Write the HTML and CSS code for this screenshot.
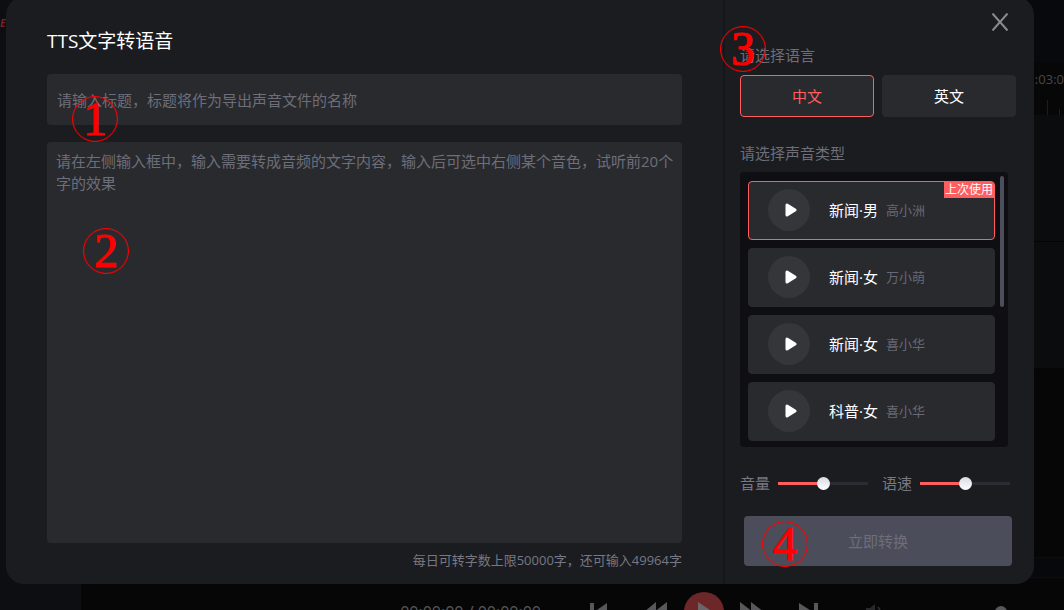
FILE: index.html
```html
<!DOCTYPE html>
<html lang="zh-CN">
<head>
<meta charset="utf-8">
<meta name="viewport" content="width=device-width, initial-scale=1">
<title>TTS文字转语音</title>
<link rel="stylesheet" href="styles.css">
</head>
<body>
<div class="stage">
  <div class="editor" aria-hidden="true">
    <div class="editor-side"><span class="editor-tag">E</span></div>
    <div class="editor-main">
      <div class="timeline">
        <div class="timeline-head"></div>
        <div class="timeline-ruler">
          <span class="timeline-time">:03:0</span>
          <span class="ticks"><i class="tick"></i><i class="tick tick-short"></i></span>
        </div>
        <div class="timeline-track"></div>
        <div class="timeline-track"></div>
        <div class="timeline-rest"></div>
        <div class="timeline-foot"></div>
      </div>
      <div class="player">
        <div class="player-row">
          <span class="player-time">00:00:00 / 00:00:00</span>
          <svg class="player-icons" width="440" height="42" viewBox="0 0 440 42">
            <g fill="#58585a">
              <path d="M9 12h4v18H9zM26 12v18L13 21z"/>
              <path d="M75 11v20L63 21zM86 11v20L73 21z"/>
              <path d="M159 11v20l13-10zM170 11v20l13-10z"/>
              <path d="M218 12v18l14-9zM233 12h4v18h-4z"/>
            </g>
            <circle cx="123" cy="21" r="20" fill="#6d2729"/>
            <path d="M117 11v20l15-10z" fill="#6a6768"/>
            <path d="M285 17h4l5-4v16l-5-4h-4z" fill="#29292c"/>
            <path d="M297 16q4 5 0 10" fill="none" stroke="#29292c" stroke-width="2"/>
            <circle cx="420" cy="21" r="6" fill="#58585a"/>
          </svg>
        </div>
      </div>
    </div>
  </div>

  <main class="dialog" role="dialog" aria-labelledby="dialog-title">
    <section class="compose">
      <h1 class="title" id="dialog-title">TTS文字转语音</h1>
      <input class="field name-field" type="text" aria-label="标题" placeholder="请输入标题，标题将作为导出声音文件的名称">
      <textarea class="field text-field" aria-label="文字内容" placeholder="请在左侧输入框中，输入需要转成音频的文字内容，输入后可选中右侧某个音色，试听前20个字的效果"></textarea>
      <p class="quota">每日可转字数上限50000字，还可输入49964字</p>
    </section>

    <section class="settings">
      <button class="close" type="button" aria-label="关闭">
        <svg width="18" height="18" viewBox="0 0 18 18"><path d="M1.500 0.500l15 17M16.500 0.500l-15 17" fill="none" stroke="#8c8c8c" stroke-width="2"/></svg>
      </button>
      <h2 class="label">请选择语言</h2>
      <div class="languages">
        <button class="language is-active" type="button">中文</button>
        <button class="language" type="button">英文</button>
      </div>
      <h2 class="label voice-label">请选择声音类型</h2>
      <div class="voices">
        <ul class="voice-list">
          <li class="voice is-active">
            <button class="play" type="button" aria-label="试听 高小洲"><svg width="12" height="14" viewBox="0 0 12 14"><path class="play-shape" d="M2 2v10L10 7z"/></svg></button>
            <span class="voice-type">新闻·男</span><span class="voice-name">高小洲</span>
            <span class="last-used">上次使用</span>
          </li>
          <li class="voice">
            <button class="play" type="button" aria-label="试听 万小萌"><svg width="12" height="14" viewBox="0 0 12 14"><path class="play-shape" d="M2 2v10L10 7z"/></svg></button>
            <span class="voice-type">新闻·女</span><span class="voice-name">万小萌</span>
          </li>
          <li class="voice">
            <button class="play" type="button" aria-label="试听 喜小华"><svg width="12" height="14" viewBox="0 0 12 14"><path class="play-shape" d="M2 2v10L10 7z"/></svg></button>
            <span class="voice-type">新闻·女</span><span class="voice-name">喜小华</span>
          </li>
          <li class="voice">
            <button class="play" type="button" aria-label="试听 喜小华"><svg width="12" height="14" viewBox="0 0 12 14"><path class="play-shape" d="M2 2v10L10 7z"/></svg></button>
            <span class="voice-type">科普·女</span><span class="voice-name">喜小华</span>
          </li>
        </ul>
        <div class="scrollbar"></div>
      </div>
      <div class="sliders">
        <label class="slider">音量<input class="range" type="range" min="0" max="100" value="50"></label>
        <label class="slider">语速<input class="range" type="range" min="0" max="100" value="50"></label>
      </div>
      <button class="convert" type="button">立即转换</button>
    </section>
  </main>

  <span class="marker marker-1">1</span>
  <span class="marker marker-2">2</span>
  <span class="marker marker-3">3</span>
  <span class="marker marker-4">4</span>
</div>
</body>
</html>
```
FILE: styles.css
```css
* { box-sizing: border-box; }

body {
  margin: 0;
  background: #060607;
  font-family: "Open Sans", "Noto Sans CJK SC", sans-serif;
  font-size: 15px;
  color: #fff;
}

button, input, textarea { font: inherit; color: inherit; }
button { border: 0; padding: 0; cursor: pointer; }
h1, h2, p, ul { margin: 0; padding: 0; font-weight: 400; }
svg { display: block; }

.stage {
  position: relative;
  display: flex;
  min-height: 100vh;
  overflow: hidden;
}

/* Dimmed editor behind the dialog */
.editor {
  position: absolute;
  inset: 0;
  display: flex;
}
.editor-side {
  width: 81px;
  padding-top: 16px;
  background: #0d0e12;
}
.editor-tag {
  display: block;
  font-size: 10px;
  line-height: 14px;
  font-weight: 700;
  font-style: italic;
  color: #7d2222;
}
.editor-main {
  flex: 1;
  display: flex;
  flex-direction: column;
}
.timeline {
  flex: 1;
  display: flex;
  flex-direction: column;
}
.timeline-head { height: 62px; background: #08090c; }
.timeline-ruler {
  display: flex;
  flex-direction: column;
  align-items: flex-end;
  justify-content: space-between;
  height: 53px;
  padding-top: 7px;
  background: #070708;
}
.timeline-time { font-size: 13px; line-height: 20px; color: #48484b; }
.ticks { display: flex; align-items: flex-end; gap: 11px; padding-right: 4px; }
.tick { width: 1px; height: 15px; background: #1d1d1f; }
.tick-short { height: 6px; }
.timeline-track {
  height: 127px;
  background: #0b0c0e;
  border-bottom: 1px solid #050506;
}
.timeline-rest { flex: 1; background: #060607; }
.timeline-foot {
  height: 21px;
  background: #07080b;
  border-top: 1px solid #0c0d10;
  border-bottom: 1px solid #0c0d10;
}
.player { height: 32px; overflow: hidden; background: #060607; }
.player-row {
  display: flex;
  align-items: center;
  justify-content: flex-end;
  gap: 40px;
  height: 68px;
  padding-right: 43px;
}
.player-time { font-size: 16px; line-height: 20px; color: #58585a; }

/* Dialog */
.dialog {
  position: relative;
  display: flex;
  flex: 1;
  min-width: 0;
  margin: -3px 30px 26px 6px;
  border-radius: 18px;
  background: #1b1c20;
}
.compose {
  flex: 1;
  min-width: 0;
  display: flex;
  flex-direction: column;
  padding: 31px 41px 15px;
  border-right: 2px solid #15161a;
}
.title { margin-bottom: 20px; font-size: 19px; line-height: 26px; }
.field {
  width: 100%;
  border: 0;
  border-radius: 4px;
  outline: 0;
  background: #292a2e;
  resize: none;
}
.field::placeholder { color: #6d6e7a; opacity: 1; }
.name-field { height: 51px; margin-bottom: 17px; padding: 0 10px; }
.text-field { flex: 1; padding: 8px 4px 8px 9px; line-height: 22px; }
.quota {
  margin-top: 8px;
  font-size: 13px;
  line-height: 18px;
  text-align: right;
  color: #777884;
}

.settings {
  position: relative;
  display: flex;
  flex-direction: column;
  width: 309px;
  padding: 48px 18px 18px 15px;
}
.close {
  position: absolute;
  top: 16px;
  right: 25px;
  background: none;
}
.label { margin-bottom: 10px; font-size: 15px; line-height: 20px; color: #6d6e7a; }
.languages { display: flex; gap: 8px; }
.language {
  flex: 1;
  height: 42px;
  padding-bottom: 2px;
  border: 1px solid #292a2e;
  border-radius: 4px;
  background: #292a2e;
}
.language.is-active { border-color: #ff5e5e; color: #ff5e5e; }
.voice-label { margin-top: 26px; margin-bottom: 9px; }

.voices {
  display: flex;
  gap: 5px;
  margin-right: 8px;
  padding: 4px 4px 6px 8px;
  border-radius: 4px;
  background: #0f0f13;
}
.voice-list {
  flex: 1;
  display: flex;
  flex-direction: column;
  gap: 8px;
  padding-top: 5px;
  list-style: none;
}
.voice {
  position: relative;
  display: flex;
  align-items: center;
  height: 59px;
  padding: 0 0 2px 19px;
  border: 1px solid #292a2e;
  border-radius: 4px;
  background: #292a2e;
}
.voice.is-active { border-color: #ff5e5e; }
.play {
  display: flex;
  align-items: center;
  justify-content: center;
  width: 42px;
  height: 42px;
  margin-right: 19px;
  padding-left: 4px;
  border-radius: 50%;
  background: #35363a;
}
.play-shape { fill: #fff; stroke: #fff; stroke-width: 3; stroke-linejoin: round; }
.voice-name { margin-left: 8px; font-size: 13px; color: #676873; }
.last-used {
  position: absolute;
  top: 0;
  right: 0;
  padding: 0 1px;
  border-radius: 0 3px 0 0;
  background: #ff5e5e;
  font-size: 12px;
  line-height: 16px;
}
.scrollbar { width: 4px; height: 131px; border-radius: 2px; background: #4c4e5b; }

.sliders { display: flex; gap: 14px; margin: 26px 6px 23px 0; }
.slider {
  flex: 1;
  min-width: 0;
  display: flex;
  align-items: center;
  gap: 8px;
  line-height: 20px;
  white-space: nowrap;
  color: #777884;
}
.range {
  flex: 1;
  width: 100%;
  min-width: 0;
  height: 13px;
  margin: 0;
  appearance: none;
  background: linear-gradient(90deg, #ff5e5e 50%, #292d33 50%) center / 100% 3px no-repeat;
}
.range::-webkit-slider-thumb {
  appearance: none;
  width: 13px;
  height: 13px;
  border-radius: 50%;
  background: linear-gradient(#d9d9e6, #fff);
}
.convert {
  height: 50px;
  margin: 0 4px;
  padding-bottom: 2px;
  border-radius: 4px;
  background: #4c4d5a;
  color: #6d6e7a;
}

/* Numbered callouts lying over the dialog */
.marker {
  position: absolute;
  display: flex;
  align-items: center;
  justify-content: center;
  width: 46px;
  height: 46px;
  border: 1px solid #f00;
  border-radius: 50%;
  box-shadow: inset 0 0 1px #f00;
  font-family: "Liberation Serif", serif;
  font-size: 48px;
  line-height: 44px;
  color: #f00;
  -webkit-text-stroke: 1px #f00;
}
.marker-1 { left: 72px; top: 96px; }
.marker-2 { left: 83px; top: 228px; }
.marker-3 { left: 720px; top: 26px; }
.marker-4 { left: 762px; top: 521px; }
```
